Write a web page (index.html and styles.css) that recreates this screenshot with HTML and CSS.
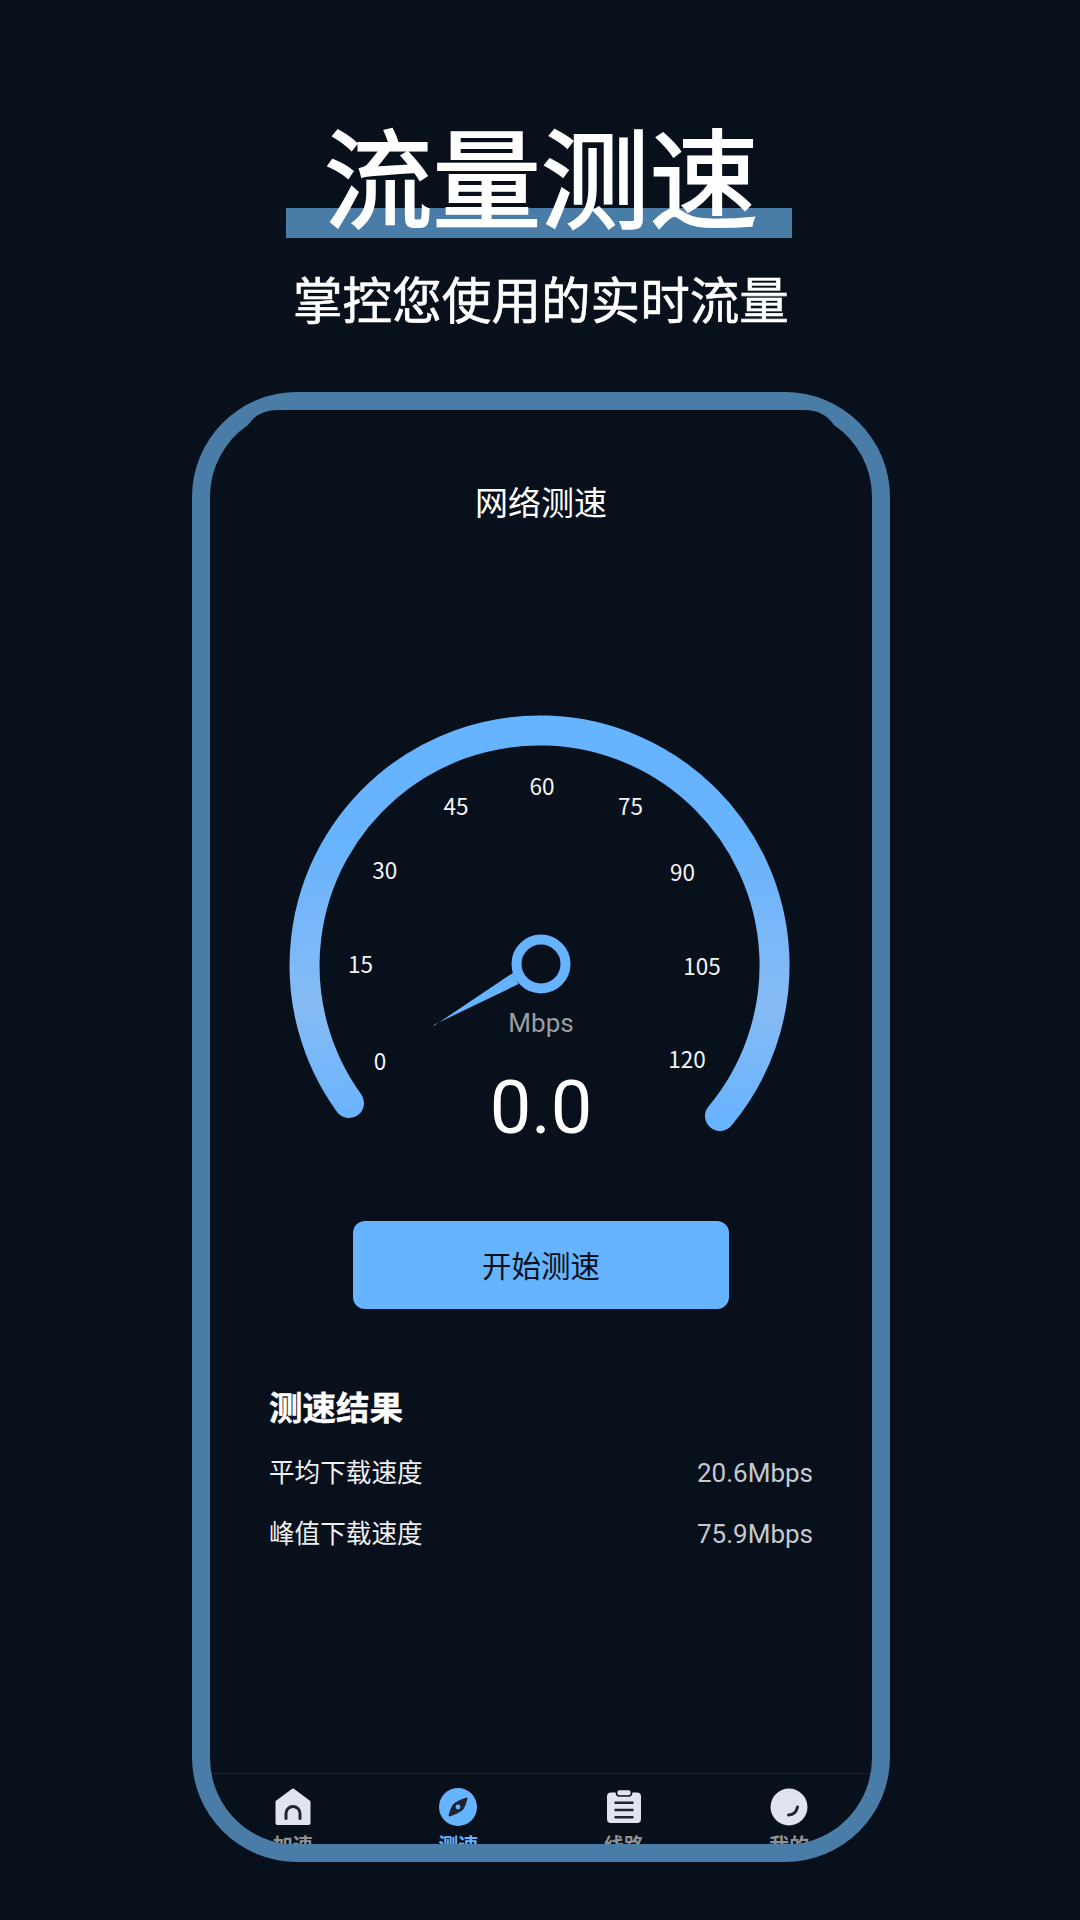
FILE: index.html
```html
<!DOCTYPE html>
<html lang="zh-CN">
<head>
<meta charset="utf-8">
<title>流量测速</title>
<link rel="stylesheet" href="styles.css">
</head>
<body>
<main class="poster">
  <h1 class="headline">流量测速</h1>
  <p class="tagline">掌控您使用的实时流量</p>
  <section class="phone">
    <h2 class="screen-title">网络测速</h2>
    <svg class="gauge" viewBox="0 0 540 460" width="540" height="460">
      <defs>
        <linearGradient id="ring" gradientUnits="userSpaceOnUse" x1="0" y1="16" x2="0" y2="431">
          <stop offset="0" stop-color="#66b3ff"/>
          <stop offset="0.3" stop-color="#68b3fe"/>
          <stop offset="0.7" stop-color="#86bbf4"/>
          <stop offset="1" stop-color="#66b3ff"/>
        </linearGradient>
      </defs>
      <path class="gauge-arc" d="M79 403A235 235 0 1 1 450 416"/>
      <polygon class="gauge-needle" points="163.6,325 163.6,326 242.8,273 248.6,284"/>
      <circle class="gauge-hub" cx="271" cy="264" r="24.5"/>
      <g class="gauge-ticks">
        <text x="110" y="370">0</text>
        <text x="90.5" y="273">15</text>
        <text x="114.7" y="179">30</text>
        <text x="186" y="115">45</text>
        <text x="272" y="95">60</text>
        <text x="360.5" y="115">75</text>
        <text x="412.5" y="181">90</text>
        <text x="432" y="275">105</text>
        <text x="417" y="368">120</text>
      </g>
      <text class="gauge-unit" x="271" y="332">Mbps</text>
      <text class="gauge-value" x="271" y="433">0.0</text>
    </svg>
    <button class="start">开始测速</button>
    <section class="results">
      <h3 class="results-title">测速结果</h3>
      <div class="row"><span class="row-label">平均下载速度</span><span class="row-value">20.6Mbps</span></div>
      <div class="row"><span class="row-label">峰值下载速度</span><span class="row-value">75.9Mbps</span></div>
    </section>
    <nav class="tabs">
      <div class="tab">
        <svg class="tab-icon" viewBox="0 0 40 40">
          <path class="ico-fill" d="M20 3.5L35.5 15V36H4.5V15Z"/>
          <path class="ico-ink" d="M13 31.5V26.5A7 7 0 0 1 27 26.5V31.5"/>
        </svg>
        <span class="tab-label">加速</span>
      </div>
      <div class="tab tab-on">
        <svg class="tab-icon" viewBox="0 0 40 40">
          <circle class="ico-blue" cx="20" cy="20" r="19"/>
          <path class="ico-solid" d="M29 11C28 17 25 23 23.5 23.5C21 25 16 28 11 29C12 23 15 17.5 16.5 16.5C19 15 24 12 29 11Z"/>
          <circle class="ico-blue" cx="20" cy="20" r="2.4"/>
        </svg>
        <span class="tab-label">测速</span>
      </div>
      <div class="tab">
        <svg class="tab-icon" viewBox="0 0 40 40">
          <rect class="ico-body" x="3" y="5.5" width="34" height="30.5" rx="4"/>
          <rect class="ico-tab" x="12.5" y="2.5" width="15" height="6.5" rx="3"/>
          <path class="ico-line" d="M10.5 15.7H29.5M10.5 23H29.5M10.5 30.3H29.5"/>
        </svg>
        <span class="tab-label">线路</span>
      </div>
      <div class="tab">
        <svg class="tab-icon" viewBox="0 0 40 40">
          <circle class="ico-body" cx="20" cy="20" r="18.5"/>
          <path class="ico-ink" d="M19.5 28Q27 27.5 28.5 20"/>
        </svg>
        <span class="tab-label">我的</span>
      </div>
    </nav>
    <svg class="bezel" viewBox="0 0 698 1470" width="698" height="1470">
      <path class="bezel-band" d="M105 0H593A105 105 0 0 1 698 105V1365A105 105 0 0 1 593 1470H105A105 105 0 0 1 0 1365V105A105 105 0 0 1 105 0ZM18 105A87 87 0 0 1 56 33Q66 18 86 18H612Q632 18 642 33A87 87 0 0 1 680 105V1366A87 87 0 0 1 606 1452H92A87 87 0 0 1 18 1366Z"/>
    </svg>
  </section>
</main>
</body>
</html>
```
FILE: styles.css
```css
* { box-sizing: border-box; margin: 0; padding: 0; }

html, body {
  width: 1080px;
  height: 1920px;
  overflow: hidden;
  background: #08101c;
}

body {
  font-family: "Noto Sans CJK SC", "Noto Sans", sans-serif;
  color: #fff;
}

.poster {
  display: flex;
  flex-direction: column;
  align-items: center;
  padding: 118px 0 0 2px;
}

.headline {
  width: 506px;
  height: 120px;
  margin-right: 4px;
  padding-left: 4px;
  font-size: 108.5px;
  line-height: 110px;
  font-weight: 400;
  -webkit-text-stroke: 2px #fff;
  text-align: center;
  white-space: nowrap;
  background: linear-gradient(to bottom, transparent 75%, #4a7ca8 75%);
}

.tagline {
  margin-top: 29px;
  margin-bottom: 4px;
  font-size: 49.6px;
  line-height: 60px;
  font-weight: 400;
  -webkit-text-stroke: 0.6px #fff;
}

.phone {
  position: relative;
  width: 698px;
  height: 1470px;
  margin-top: 61px;
  padding: 87px 18px 0;
  display: flex;
  flex-direction: column;
  align-items: center;
}

.screen-title {
  font-size: 33px;
  line-height: 44px;
  font-weight: 400;
}

.gauge {
  display: block;
  margin: 177px 2px 0 0;
  flex: none;
}

.gauge-arc {
  fill: none;
  stroke: url(#ring);
  stroke-width: 30;
  stroke-linecap: round;
}

.gauge-needle { fill: #66b3ff; }

.gauge-hub {
  fill: none;
  stroke: #66b3ff;
  stroke-width: 10;
}

.gauge-ticks text {
  font-size: 22.5px;
  fill: #f4f5f7;
  text-anchor: middle;
}

.gauge-unit {
  font-family: Roboto, sans-serif;
  font-size: 26px;
  fill: #9a9da3;
  text-anchor: middle;
}

.gauge-value {
  font-family: Roboto, sans-serif;
  font-size: 74px;
  fill: #fff;
  text-anchor: middle;
}

.start {
  flex: none;
  width: 376px;
  height: 88px;
  margin-top: 61px;
  padding-bottom: 2px;
  border: 0;
  border-radius: 12px;
  background: #66b3ff;
  color: #08101c;
  font-family: inherit;
  font-size: 29.5px;
}

.results {
  width: 100%;
  margin-top: 75px;
  padding: 0 59px;
}

.results-title {
  font-size: 33.5px;
  line-height: 44px;
  font-weight: 700;
  -webkit-text-stroke: 0.4px #fff;
  margin-bottom: 25px;
}

.row {
  display: flex;
  justify-content: space-between;
  align-items: center;
  height: 40px;
  margin-bottom: 21px;
}

.row-label {
  font-size: 25.6px;
  line-height: 36px;
  margin-bottom: 4px;
  color: #f0f1f3;
}

.row-value {
  font-family: Roboto, sans-serif;
  font-size: 26px;
  color: #c6c9ce;
}

.tabs {
  width: 100%;
  height: 89px;
  margin-top: auto;
  border-top: 1px solid #1a2230;
  display: grid;
  grid-template-columns: repeat(4, 1fr);
}

.tab {
  display: flex;
  flex-direction: column;
  align-items: center;
  padding-top: 13px;
  gap: 4px;
}

.tab-icon {
  display: block;
  width: 40px;
  height: 40px;
  flex: none;
}

.tab-label {
  font-size: 20px;
  line-height: 28px;
  font-weight: 700;
  color: #8f9094;
}

.tab-on .tab-label { color: #66b3ff; }

.ico-fill {
  fill: #e1e3ee;
  stroke: #e1e3ee;
  stroke-width: 4;
  stroke-linejoin: round;
}

.ico-body { fill: #e1e3ee; }
.ico-blue { fill: #66b3ff; }
.ico-solid { fill: #1f2433; stroke: #1f2433; stroke-width: 1; stroke-linejoin: round; }

.ico-tab {
  fill: #e1e3ee;
  stroke: #08101c;
  stroke-width: 1.5;
}

.ico-ink {
  fill: none;
  stroke: #1f2433;
  stroke-width: 3;
  stroke-linecap: round;
}

.ico-line {
  fill: none;
  stroke: #1f2433;
  stroke-width: 2.5;
}

.bezel {
  position: absolute;
  left: 0;
  top: 0;
  pointer-events: none;
}

.bezel-band {
  fill: #4a7ca8;
  fill-rule: evenodd;
}
```
